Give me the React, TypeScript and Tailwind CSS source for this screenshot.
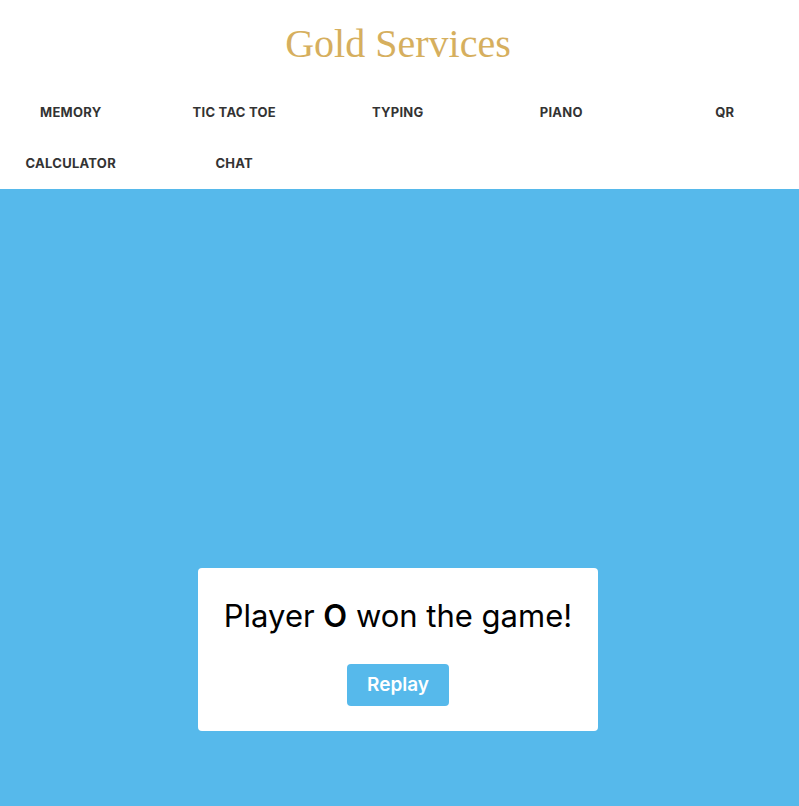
import React from "react";

const items = ["MEMORY", "TIC TAC TOE", "TYPING", "PIANO", "QR", "CALCULATOR", "CHAT"];

export default function App() {
  return (
    <div className="w-[799px] min-h-[806px] bg-white flex flex-col" style={{ fontFamily: "Inter, 'Noto Sans', sans-serif" }}>
      <header className="bg-white pr-[3px]">
        <h1
          className="pt-[20px] h-[68px] text-center text-[40px] leading-[48px] text-[#d6af5e] font-normal"
          style={{ fontFamily: "'Liberation Serif', 'Times New Roman', serif" }}
        >
          Gold Services
        </h1>
        <nav className="mt-[19px] ml-[-11px] grid grid-cols-[repeat(5,163.5px)]">
          {items.map((t) => (
            <a
              key={t}
              className="h-[51px] flex items-center justify-center text-[13px] font-bold text-[#333] tracking-[0.02em]"
            >
              {t}
            </a>
          ))}
        </nav>
      </header>
      <main className="flex-1 bg-[#56b9eb] flex flex-col items-center justify-end pb-[75px] pr-[3px] h-[617px]">
        <div className="w-[400px] h-[163px] bg-white rounded-[4px] flex flex-col items-center pt-[28px]">
          <p className="text-[31px] leading-[40px] text-black">
            Player <span className="font-semibold">O</span> won the game!
          </p>
          <button className="mt-[28px] w-[102px] h-[42px] rounded-[4px] bg-[#56b9eb] text-white text-[19px] font-semibold">
            Replay
          </button>
        </div>
      </main>
    </div>
  );
}
